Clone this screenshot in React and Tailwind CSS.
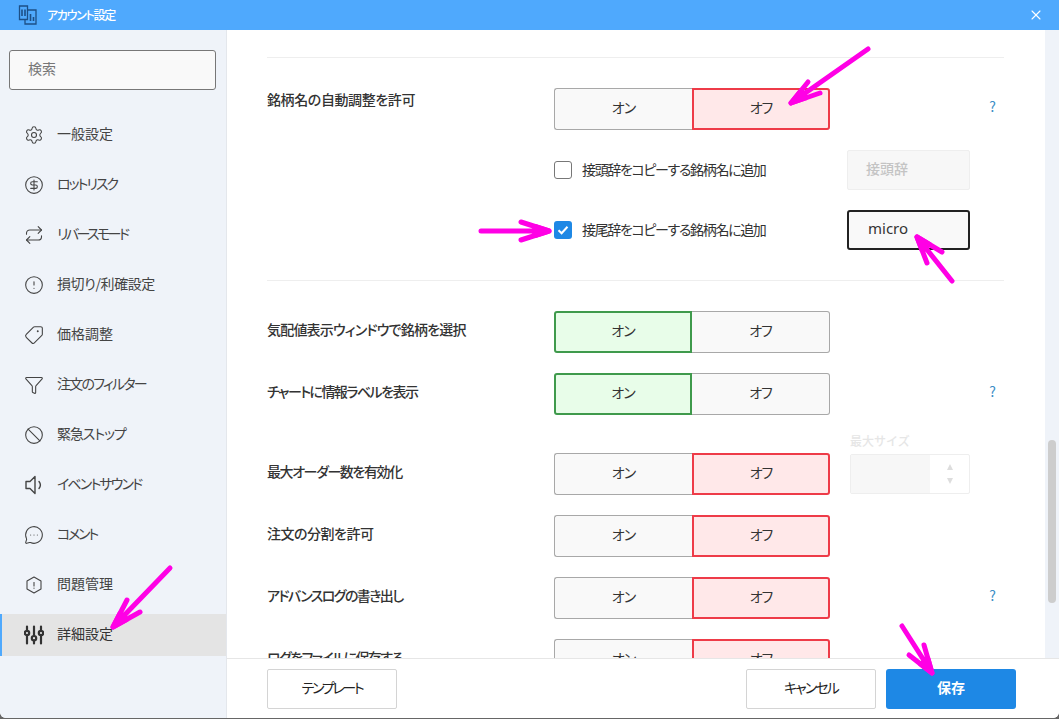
import React from 'react';
import {
  Settings,
  CircleDollarSign,
  Repeat,
  CircleAlert,
  Tag,
  Funnel,
  Ban,
  MessageCircleMore,
  X,
} from 'lucide-react';

const font = "font-['Noto_Sans_CJK_JP','Noto_Sans',sans-serif]";

function Speaker(props) {
  return (
    <svg viewBox="0 0 20 20" fill="none" stroke="currentColor" {...props} strokeWidth="1.4" strokeLinejoin="round" strokeLinecap="round">
      <path d="M11 1.5 L6 6.5 H2 V13.5 H6 L11 18.5 Z" />
      <path d="M15 6.5 C16.6 8.5 16.6 11.5 15 13.5" />
    </svg>
  );
}

function HexAlert(props) {
  return (
    <svg viewBox="0 0 20 20" fill="none" stroke="currentColor" {...props} strokeWidth="1.1" strokeLinejoin="round" strokeLinecap="round">
      <path d="M10 2 L17 6 V14 L10 18 L3 14 V6 Z" />
      <path d="M10 7.5 V11" />
      <path d="M10 13 V13.2" />
    </svg>
  );
}

function Sliders(props) {
  return (
    <svg viewBox="0 0 20 20" fill="none" stroke="currentColor" {...props} strokeWidth="2.2" strokeLinecap="round">
      <path d="M3 1.5 V5 M3 11 V18.5" />
      <circle cx="3" cy="8" r="2.2" />
      <path d="M10 1.5 V10 M10 16 V18.5" />
      <circle cx="10" cy="13.2" r="2.2" />
      <path d="M17 1.5 V5 M17 11 V18.5" />
      <circle cx="17" cy="8" r="2.2" />
    </svg>
  );
}

function Logo() {
  return (
    <svg viewBox="0 0 20 20" className="w-[20px] h-[20px]" fill="none" stroke="#1d4f86" strokeWidth="1.3">
      <path d="M1.5 1 H9.5 V14.5 H1.5 Z" />
      <path d="M9.5 5 H18 V19 H7 V14.5" />
      <path d="M4 4.5 V11 M7 4.5 V11 M12.5 9 V16 M15.5 12 V16" strokeWidth="1.6" />
    </svg>
  );
}

const menu = [
  ['一般設定', Settings, 'tracking-[0px]'],
  ['ロットリスク', CircleDollarSign, 'tracking-[-2px]'],
  ['リバースモード', Repeat, 'tracking-[-2.6px]'],
  ['損切り/利確設定', CircleAlert, 'tracking-[-0.4px]'],
  ['価格調整', Tag, 'tracking-[0px]'],
  ['注文のフィルター', Funnel, 'tracking-[-1.75px]'],
  ['緊急ストップ', Ban, 'tracking-[-1.1px]'],
  ['イベントサウンド', Speaker, 'tracking-[-1.85px]'],
  ['コメント', MessageCircleMore, 'tracking-[-2.2px]'],
  ['問題管理', HexAlert, 'tracking-[0px]'],
  ['詳細設定', Sliders, 'tracking-[0px]'],
];

const half = 'w-[138px] flex items-center justify-center pb-[4px]';

function Toggle({ on }) {
  return (
    <div className="flex w-[276px] h-[42px] text-[14px] tracking-[-1px] text-[#333] shrink-0 [font-feature-settings:'palt']">
      <div
        className={
          on
            ? half + ' rounded-l-[3px] border-2 border-[#3f9a4c] bg-[#e8fde9]'
            : half + ' rounded-l-[3px] border border-r-0 border-[#a8a8a8] bg-[#f9f9f9]'
        }
      >
        オン
      </div>
      <div
        className={
          on
            ? half + ' rounded-r-[3px] border border-l-0 border-[#a8a8a8] bg-[#f9f9f9]'
            : half + ' rounded-r-[3px] border-2 border-[#ee3b48] bg-[#ffe8e9]'
        }
      >
        オフ
      </div>
    </div>
  );
}

function Row({ label, on, help, tight, children, top, labelClass }) {
  return (
    <div className={'flex items-center h-[42px] shrink-0 ' + (top || 'mt-[20px]')}>
      <div className={"w-[287px] shrink-0 text-[14px] font-medium text-[#333] [font-feature-settings:'palt'] " + (labelClass || 'pb-[6px] ') + ' ' + (tight || '')}>{label}</div>
      <Toggle on={on} />
      <div className="w-[20px] shrink-0" />
      <div className="w-[120px] shrink-0 relative">{children}</div>
      {help && <span className="ml-auto mr-[8px] pb-[5px] text-[14px] text-[#3b8ec6]">?</span>}
    </div>
  );
}

function CheckRow({ checked, label, children }) {
  return (
    <div className="flex items-center h-[40px] pl-[287px] mt-[20px]">
      <div className="w-[293px] shrink-0 flex items-center gap-[10px]">
        {checked ? (
          <span className="w-[18px] h-[18px] rounded-[3px] bg-[#1e88e5] flex items-center justify-center">
            <svg viewBox="0 0 18 18" className="w-[18px] h-[18px]" fill="none" stroke="white" strokeWidth="2">
              <path d="M4.5 9.2 L7.6 12.2 L13.5 5.8" />
            </svg>
          </span>
        ) : (
          <span className="w-[18px] h-[18px] rounded-[3px] border border-[#777] bg-white" />
        )}
        <span className="pb-[2px] text-[14px] tracking-[-1.35px] text-[#333] [font-feature-settings:'palt']">{label}</span>
      </div>
      {children}
    </div>
  );
}

function Arrow({ tail, tip, w1, w2 }) {
  const mid = (a, b) => [a[0] + (b[0] - a[0]) * 0.5, a[1] + (b[1] - a[1]) * 0.5];
  const m1 = mid(tip, w1);
  const m2 = mid(tip, w2);
  return (
    <g>
      <path d={`M${tail} L${tip} M${w1} L${tip} L${w2}`} />
      <path d={`M${tip} L${m1} L${m2} Z`} fill="#ff00e5" />
    </g>
  );
}

function Arrows() {
  return (
    <svg className="absolute inset-0 w-[1059px] h-[719px] pointer-events-none" viewBox="0 0 1059 719" fill="none" stroke="#ff00e5" strokeWidth="5" strokeLinecap="round" strokeLinejoin="round">
      <Arrow tail={[868, 49]} tip={[791, 103]} w1={[808, 82]} w2={[820, 93]} />
      <Arrow tail={[481, 231]} tip={[549, 231]} w1={[521, 222]} w2={[521, 240]} />
      <Arrow tail={[952, 281]} tip={[917, 237]} w1={[942, 252]} w2={[927, 263]} />
      <Arrow tail={[170, 568]} tip={[113, 627]} w1={[127, 600]} w2={[140, 612]} />
      <Arrow tail={[902, 626]} tip={[932, 673]} w1={[924, 645]} w2={[909, 655]} />
    </svg>
  );
}

export default function App() {
  return (
    <div className={'relative w-[1059px] h-[719px] overflow-hidden bg-[#666] ' + font}>
      <div className="w-[1059px] h-[718px] flex flex-col rounded-b-[6px] overflow-hidden bg-white">
        <div className="h-[30px] shrink-0 bg-[#4fa9fd] flex items-center pl-[18px] pr-[15px]">
          <Logo />
          <span className="ml-[9px] text-[12px] font-medium tracking-[-1.3px] text-white [font-feature-settings:'palt']">アカウント設定</span>
          <X className="ml-auto w-[16px] h-[16px] text-white" strokeWidth={1.6} />
        </div>

        <div className="flex flex-1 min-h-0">
          <aside className="w-[227px] shrink-0 bg-[#eff3f9] border-r border-[#e4e7ec] pt-[20px]">
            <div className="mx-[9px] w-[207px] h-[40px] pb-[4px] rounded-[3px] border border-[#777] bg-[#f9f9f9] flex items-center pl-[18px] text-[14px] text-[#777]">
              検索
            </div>
            <nav className="mt-[24px] flex flex-col gap-[8px]">
              {menu.map(([name, Icon, tight]) => {
                const active = name === '詳細設定';
                return (
                  <div
                    key={name}
                    className={
                      active
                        ? 'h-[42px] flex items-center pl-[22px] bg-[#e4e4e4] border-l-2 border-[#4fa9fd] text-[#333]'
                        : 'h-[42px] flex items-center pl-[24px] text-[#444]'
                    }
                  >
                    <Icon className={name === '価格調整' ? 'w-[20px] h-[20px] -scale-x-100' : 'w-[20px] h-[20px]'} strokeWidth={1.3} />
                    <span className={"ml-[13px] pb-[4px] text-[14px] [font-feature-settings:'palt'] " + tight}>{name}</span>
                  </div>
                );
              })}
            </nav>
          </aside>

          <main className="flex-1 min-w-0 flex flex-col">
            <div className="flex flex-1 min-h-0">
              <div className="flex-1 min-w-0 overflow-hidden pl-[40px] pr-[41px] pt-[27px]">
                <div className="border-t border-[#eeeeee] pt-[30px] pb-[30px]">
                  <Row label="銘柄名の自動調整を許可" on={false} help top="mt-0" tight="tracking-[-0.4px]" labelClass="self-start pt-[1px]" />
                  <CheckRow label="接頭辞をコピーする銘柄名に追加">
                    <div className="w-[123px] h-[40px] pb-[4px] pl-[18px] flex items-center rounded-[2px] border border-[#eeeeee] bg-[#f7f7f7] text-[14px] font-medium text-[#c4c4c4]">
                      接頭辞
                    </div>
                  </CheckRow>
                  <CheckRow checked label="接尾辞をコピーする銘柄名に追加">
                    <div className="w-[123px] h-[40px] pb-[3px] pl-[19px] flex items-center rounded-[3px] border-2 border-[#222] bg-[#f9f9f9] font-['Noto_Sans',sans-serif] text-[15px] text-[#333]">
                      micro
                    </div>
                  </CheckRow>
                </div>
                <div className="border-t border-[#eeeeee] pt-[30px]">
                  <Row label="気配値表示ウィンドウで銘柄を選択" on tight="tracking-[-0.8px]" top="mt-0" />
                  <Row label="チャートに情報ラベルを表示" on help tight="tracking-[-1.55px]" />
                  <Row label="最大オーダー数を有効化" on={false} tight="tracking-[-1.4px]" top="mt-[38px]">
                    <div className="absolute left-0 -top-[42px] text-[12px] font-medium text-[#e6e6e6]">最大サイズ</div>
                    <div className="absolute left-0 -top-[20px] w-[120px] h-[40px] flex rounded-[2px] border border-[#eeeeee]">
                      <div className="w-[79px] bg-[#f7f7f7]" />
                      <div className="flex-1 flex flex-col items-center justify-center gap-[8px]">
                        <span className="w-0 h-0 border-x-[3px] border-x-transparent border-b-[6px] border-b-[#dddddd]" />
                        <span className="w-0 h-0 border-x-[3px] border-x-transparent border-t-[6px] border-t-[#dddddd]" />
                      </div>
                    </div>
                  </Row>
                  <Row label="注文の分割を許可" on={false} tight="tracking-[-0.5px]" />
                  <Row label="アドバンスログの書き出し" on={false} help tight="tracking-[-1.6px]" />
                  <Row label="ログをファイルに保存する" on={false} tight="tracking-[-1.6px]" />
                </div>
              </div>
              <div className="w-[14px] shrink-0 bg-[#eff3f9] relative">
                <div className="absolute left-[3px] top-[410px] w-[8px] h-[163px] rounded-full bg-[#cdcdcd]" />
              </div>
            </div>
            <footer className="h-[60px] shrink-0 border-t border-[#e6e6e6] bg-white flex items-center pl-[40px] pr-[43px] text-[14px] [font-feature-settings:'palt']">
              <div className="w-[130px] h-[40px] pb-[2px] border border-[#d4d4d4] rounded-[2px] flex items-center justify-center tracking-[-2.3px] text-[#222]">テンプレート</div>
              <div className="ml-auto w-[130px] h-[40px] pb-[2px] border border-[#d4d4d4] rounded-[2px] flex items-center justify-center tracking-[-1.9px] text-[#222]">キャンセル</div>
              <div className="ml-[10px] w-[130px] h-[40px] pb-[2px] rounded-[3px] bg-[#1e88e5] flex items-center justify-center font-bold text-white">保存</div>
            </footer>
          </main>
        </div>
      </div>
      <Arrows />
    </div>
  );
}
